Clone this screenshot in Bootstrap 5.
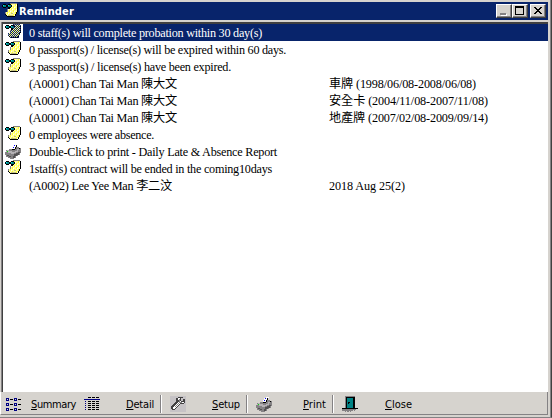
<!DOCTYPE html>
<html lang="en">
<head>
<meta charset="utf-8">
<title>Reminder</title>
<link href="https://cdn.jsdelivr.net/npm/bootstrap@5.3.0/dist/css/bootstrap.min.css" rel="stylesheet">
<style>
:root{--face:#d6d3ce;--navy:#08246b;--shade:#848284}
body{width:552px;height:418px;overflow:hidden;background:var(--face);color:#000}
.window{width:552px;height:418px;background:var(--face);border-right:1px solid #404040;border-bottom:1px solid var(--shade);padding:2px 3px 2px 0;box-shadow:inset -1px 0 var(--shade)}
.titlebar{height:18px;background:var(--navy);color:#fff;font:bold 11px/18px "DejaVu Sans Condensed","DejaVu Sans",sans-serif;padding:0 2px 0 2px}
.titlebar .caption{margin-left:1px;padding-top:1px;flex:0 0 56px}
.winbtn{width:16px;height:14px;background:var(--face);border:1px solid #fff;border-right-color:#404040;border-bottom-color:#404040;box-shadow:inset -1px -1px var(--shade);padding:0;border-radius:0;line-height:0}
.winbtn.apart{margin-left:2px}
.listbox{height:370px;margin-top:2px;background:#fff;border-top:2px solid #404040;border-left:1px solid #404040;box-shadow:-1px 0 var(--shade);margin-left:2px;font:12.2px/17px "Liberation Serif","Noto Sans CJK TC",serif}
.entry{height:17px;white-space:nowrap}
.entry .glyph{width:20px;padding-left:2px;height:17px;flex:none}
.entry .words{flex:none;width:306px;padding-left:6px}
.entry .fit{line-height:19px;height:17px}
.entry.chosen .words{background:var(--navy);color:#fff;flex:1;height:17px}
.toolbar{height:23px;border-right:1px solid var(--shade);border-bottom:1px solid var(--shade);border-left:1px solid #fff;padding-top:1px;font:11px/22px "DejaVu Sans Condensed","DejaVu Sans",sans-serif}
.tool{height:22px;padding-left:5px}
.tool .fit{line-height:24px;height:22px}
.rule{width:2px;height:18px;background:linear-gradient(90deg,var(--shade) 50%,#fff 50%)}
.tool u{text-underline-offset:1px;text-decoration-thickness:1px}
.t-summary{width:78px}
.t-summary .fit{margin-left:9px}
.t-detail{padding-left:26px;width:60px}
.t-setup{padding-left:8px;width:84px}
.t-setup .fit{margin-left:26px}
.t-print{padding-left:8px;width:84px}
.t-print .fit{margin-left:31px}
.t-close{padding-left:8px}
.t-close .fit{margin-left:27px}
svg{display:block;shape-rendering:crispEdges;flex:none}
.fit{display:inline-block;white-space:nowrap}
</style>
<script src="https://cdn.jsdelivr.net/npm/bootstrap@5.3.0/dist/js/bootstrap.bundle.min.js"></script>
</head>
<body>
<svg width="0" height="0" class="position-absolute">
<defs>
<pattern id="dots" width="4" height="4" patternUnits="userSpaceOnUse"><path fill="#ffff9c" d="M0 0h4v4h-4z"/><path fill="#fff" d="M0 0h1v1h-1zM2 2h1v1h-1z"/><path fill="#ffff31" d="M1 1h1v2h-1zM3 3h1v1h-1zM3 0h1v1h-1z"/></pattern>
<pattern id="dither" width="2" height="2" patternUnits="userSpaceOnUse"><path fill="#08246b" d="M0 0h1v1h-1zM1 1h1v1h-1z"/></pattern>
<symbol id="note" viewBox="0 0 16 16">
<path fill="#848284" d="M8 0h7v1h-7zM5 6h1v3h-1zM3 9h1v2h-1z"/>
<path fill="url(#dots)" d="M8 1h7v8h-1v2h-1v2h-8v-1h-1v-3h2v-3h2z"/>
<path fill="#000" d="M15 1h1v8h-1v2h-1v2h-1v1h-8v-1h-1v-1h-1v-1h1v1h1v1h8v-2h1v-2h1z"/>
<path fill="#c6c384" d="M9 10h2v1h-2zM6 12h5v1h-5z"/>
<path fill="#000" d="M1 1h3v1h2v-1h3v1h1v2h-1v1h-3v-1h-2v1h-3v-1h-1v-2h1zM6 5h2v1h-2z"/>
<path fill="#008284" d="M1 2h3v2h-3zM6 2h3v2h-3z"/><path fill="#00e3e7" d="M1 2h1v1h-1zM6 2h1v1h-1z"/>
</symbol>
<symbol id="printer" viewBox="0 0 16 16">
<path fill="#fff" d="M8 2h2v-1h3v1h-1v2h-1v3h-5v-1h1v-2h1z"/>
<path fill="#848284" d="M1 7h3v-1h3v1h3v-1h1v-2h3v1h2v5h-1v2h-2v1h-2v2h-2v1h-4v-1h-2v-1h-2v-2h-1v-3h1z"/>
<path fill="#b5b2b5" d="M2 7h2v1h3v1h3v-1h2v-2h2v1h-1v2h-2v1h-2v1h-3v-1h-3v-1h-2z"/>
<path fill="#525152" d="M9 11h2v-1h2v-1h2v1h-1v2h-2v1h-2v2h-2v-2h1zM2 12h2v1h2v1h-2v-1h-2z"/>
<path fill="#000" d="M11 2h1v2h-1v2h-1v1h-3v-1h3v-2h1zM14 5h1v1h-1z"/>
<path fill="#0000ff" d="M9 2h1v1h-1zM8 4h1v1h-1z"/><path fill="#00e300" d="M2 8h1v1h-1z"/>
</symbol>
</defs>
</svg>
<main class="window d-flex flex-column">
<header class="titlebar d-flex align-items-center">
<svg width="16" height="16"><use href="#note"/></svg>
<span class="caption fit" data-w="55">Reminder</span>
<div class="d-flex ms-auto" role="group">
<button class="winbtn" aria-label="Minimize"><svg width="14" height="12"><path fill="#fff" d="M4 9h6v2h-6z"/><path fill="#848284" d="M3 8h6v2h-6z"/></svg></button>
<button class="winbtn" aria-label="Maximize"><svg width="14" height="12"><path fill="#000" fill-rule="evenodd" d="M2 1h9v9h-9zM3 3v6h7v-6z"/></svg></button>
<button class="winbtn apart" aria-label="Close"><svg width="14" height="12"><path fill="#000" d="M3 2h2v1h1v1h2v-1h1v-1h2v1h-1v1h-1v1h-1v1h1v1h1v1h1v1h-2v-1h-1v-1h-2v1h-1v1h-2v-1h1v-1h1v-1h1v-1h-1v-1h-1v-1h-1z"/></svg></button>
</div>
</header>
<section class="listbox">
<div class="entry chosen d-flex"><span class="glyph"><svg width="16" height="16"><use href="#note"/><path fill="url(#dither)" d="M8 0h8v9h-1v2h-1v3h-9v-2h-2v-3h2v-3h3z"/></svg></span><span class="words"><span class="fit" data-w="233">0 staff(s) will complete probation within 30 day(s)</span></span></div>
<div class="entry d-flex"><span class="glyph"><svg width="16" height="16"><use href="#note"/></svg></span><span class="words"><span class="fit" data-w="257">0 passport(s) / license(s) will be expired within 60 days.</span></span></div>
<div class="entry d-flex"><span class="glyph"><svg width="16" height="16"><use href="#note"/></svg></span><span class="words"><span class="fit" data-w="202">3 passport(s) / license(s) have been expired.</span></span></div>
<div class="entry d-flex"><span class="glyph"></span><span class="words"><span class="fit" data-w="148">(A0001) Chan Tai Man 陳大文</span></span><span class="fit" data-w="147">車牌 (1998/06/08-2008/06/08)</span></div>
<div class="entry d-flex"><span class="glyph"></span><span class="words"><span class="fit" data-w="148">(A0001) Chan Tai Man 陳大文</span></span><span class="fit" data-w="159">安全卡 (2004/11/08-2007/11/08)</span></div>
<div class="entry d-flex"><span class="glyph"></span><span class="words"><span class="fit" data-w="148">(A0001) Chan Tai Man 陳大文</span></span><span class="fit" data-w="159">地產牌 (2007/02/08-2009/09/14)</span></div>
<div class="entry d-flex"><span class="glyph"><svg width="16" height="16"><use href="#note"/></svg></span><span class="words"><span class="fit" data-w="125">0 employees were absence.</span></span></div>
<div class="entry d-flex"><span class="glyph"><svg width="16" height="16"><use href="#printer"/></svg></span><span class="words"><span class="fit" data-w="248">Double-Click to print - Daily Late &amp; Absence Report</span></span></div>
<div class="entry d-flex"><span class="glyph"><svg width="16" height="16"><use href="#note"/></svg></span><span class="words"><span class="fit" data-w="243">1staff(s) contract will be ended in the coming10days</span></span></div>
<div class="entry d-flex"><span class="glyph"></span><span class="words"><span class="fit" data-w="143">(A0002) Lee Yee Man 李二汶</span></span><span class="fit" data-w="76">2018 Aug 25(2)</span></div>
</section>
<nav class="toolbar d-flex align-items-center">
<div class="tool t-summary d-flex align-items-center"><svg width="16" height="16"><path fill="#000084" fill-rule="evenodd" d="M0 2h3v3h-3zM1 3v1h1v-1zM8 2h3v3h-3zM9 3v1h1v-1zM0 7h3v3h-3zM1 8v1h1v-1zM8 7h3v3h-3zM9 8v1h1v-1zM0 12h3v3h-3zM1 13v1h1v-1zM8 12h3v3h-3zM9 13v1h1v-1z"/><path fill="#000" d="M4 3h3v1h-3zM12 3h3v1h-3zM4 8h3v1h-3zM12 8h3v1h-3zM4 13h3v1h-3zM12 13h3v1h-3z"/></svg><span class="fit" data-w="45"><u>S</u>ummary</span></div>
<div class="tool d-flex align-items-center"><svg width="16" height="16"><path fill="none" stroke="#000" stroke-dasharray="3 1" d="M4 1.5h11M4 5.5h11M4 7.5h11M4 9.5h11M4 11.5h11M4 13.5h11"/><path fill="#000084" d="M0 3h16v1h-16zM1 5h1v1h-1zM1 7h1v1h-1zM1 9h1v1h-1zM1 11h1v1h-1zM1 13h1v1h-1z"/></svg></div>
<div class="tool t-detail"><span class="fit" data-w="28"><u>D</u>etail</span></div>
<i class="rule"></i>
<div class="tool t-setup d-flex align-items-center"><svg width="16" height="16"><path fill="#c6c3c6" d="M0 0h16v16h-16z"/><path fill="#424142" d="M9 1h4v1h-2v3h2v-2h2v4h-1v1h-4v1h-1v1h-1v1h-1v1h-1v1h-1v1h-3v-1h-1v-3h1v-1h1v-1h1v-1h1v-1h1v-4h1z"/><path fill="#fff" d="M8 2h2v3h1v1h3v1h-4v1h-1v1h-1v1h-1v1h-1v1h-1v1h-2v-2h1v-1h1v-1h1v-1h1v-1h1v-1h1z"/><path fill="#848284" d="M9 3h1v3h2v1h-3v1h-1v1h-1v1h-1v1h-1v-1h1v-1h1v-1h1v-1h1z"/></svg><span class="fit" data-w="28"><u>S</u>etup</span></div>
<i class="rule"></i>
<div class="tool t-print d-flex align-items-center"><svg width="16" height="16"><use href="#printer"/></svg><span class="fit" data-w="23"><u>P</u>rint</span></div>
<i class="rule"></i>
<div class="tool t-close d-flex align-items-center"><svg width="16" height="16"><path fill="#848284" d="M3 0h10v12h-10zM0 13h14v1h-1v1h-1v-1h-1v1h-2v1h-1v-1h-1v1h-2v-1h-1v1h-1v-1h-3z"/><path fill="#000" d="M4 1h9v11h3v1h-16v-1h4z"/><path fill="#008284" d="M5 2h6v10h-6z"/><path fill="#000" d="M6 6h2v1h-1v1h-1z"/></svg><span class="fit" data-w="27"><u>C</u>lose</span></div>
</nav>
</main>
<script>
// Spread each label over its set width by adjusting the tracking.
document.querySelectorAll('.fit').forEach(function (el) {
  var range = document.createRange();
  range.selectNodeContents(el);
  var natural = range.getBoundingClientRect().width;
  el.style.letterSpacing = (el.dataset.w - natural) / el.textContent.length + 'px';
});
</script>
</body>
</html>
